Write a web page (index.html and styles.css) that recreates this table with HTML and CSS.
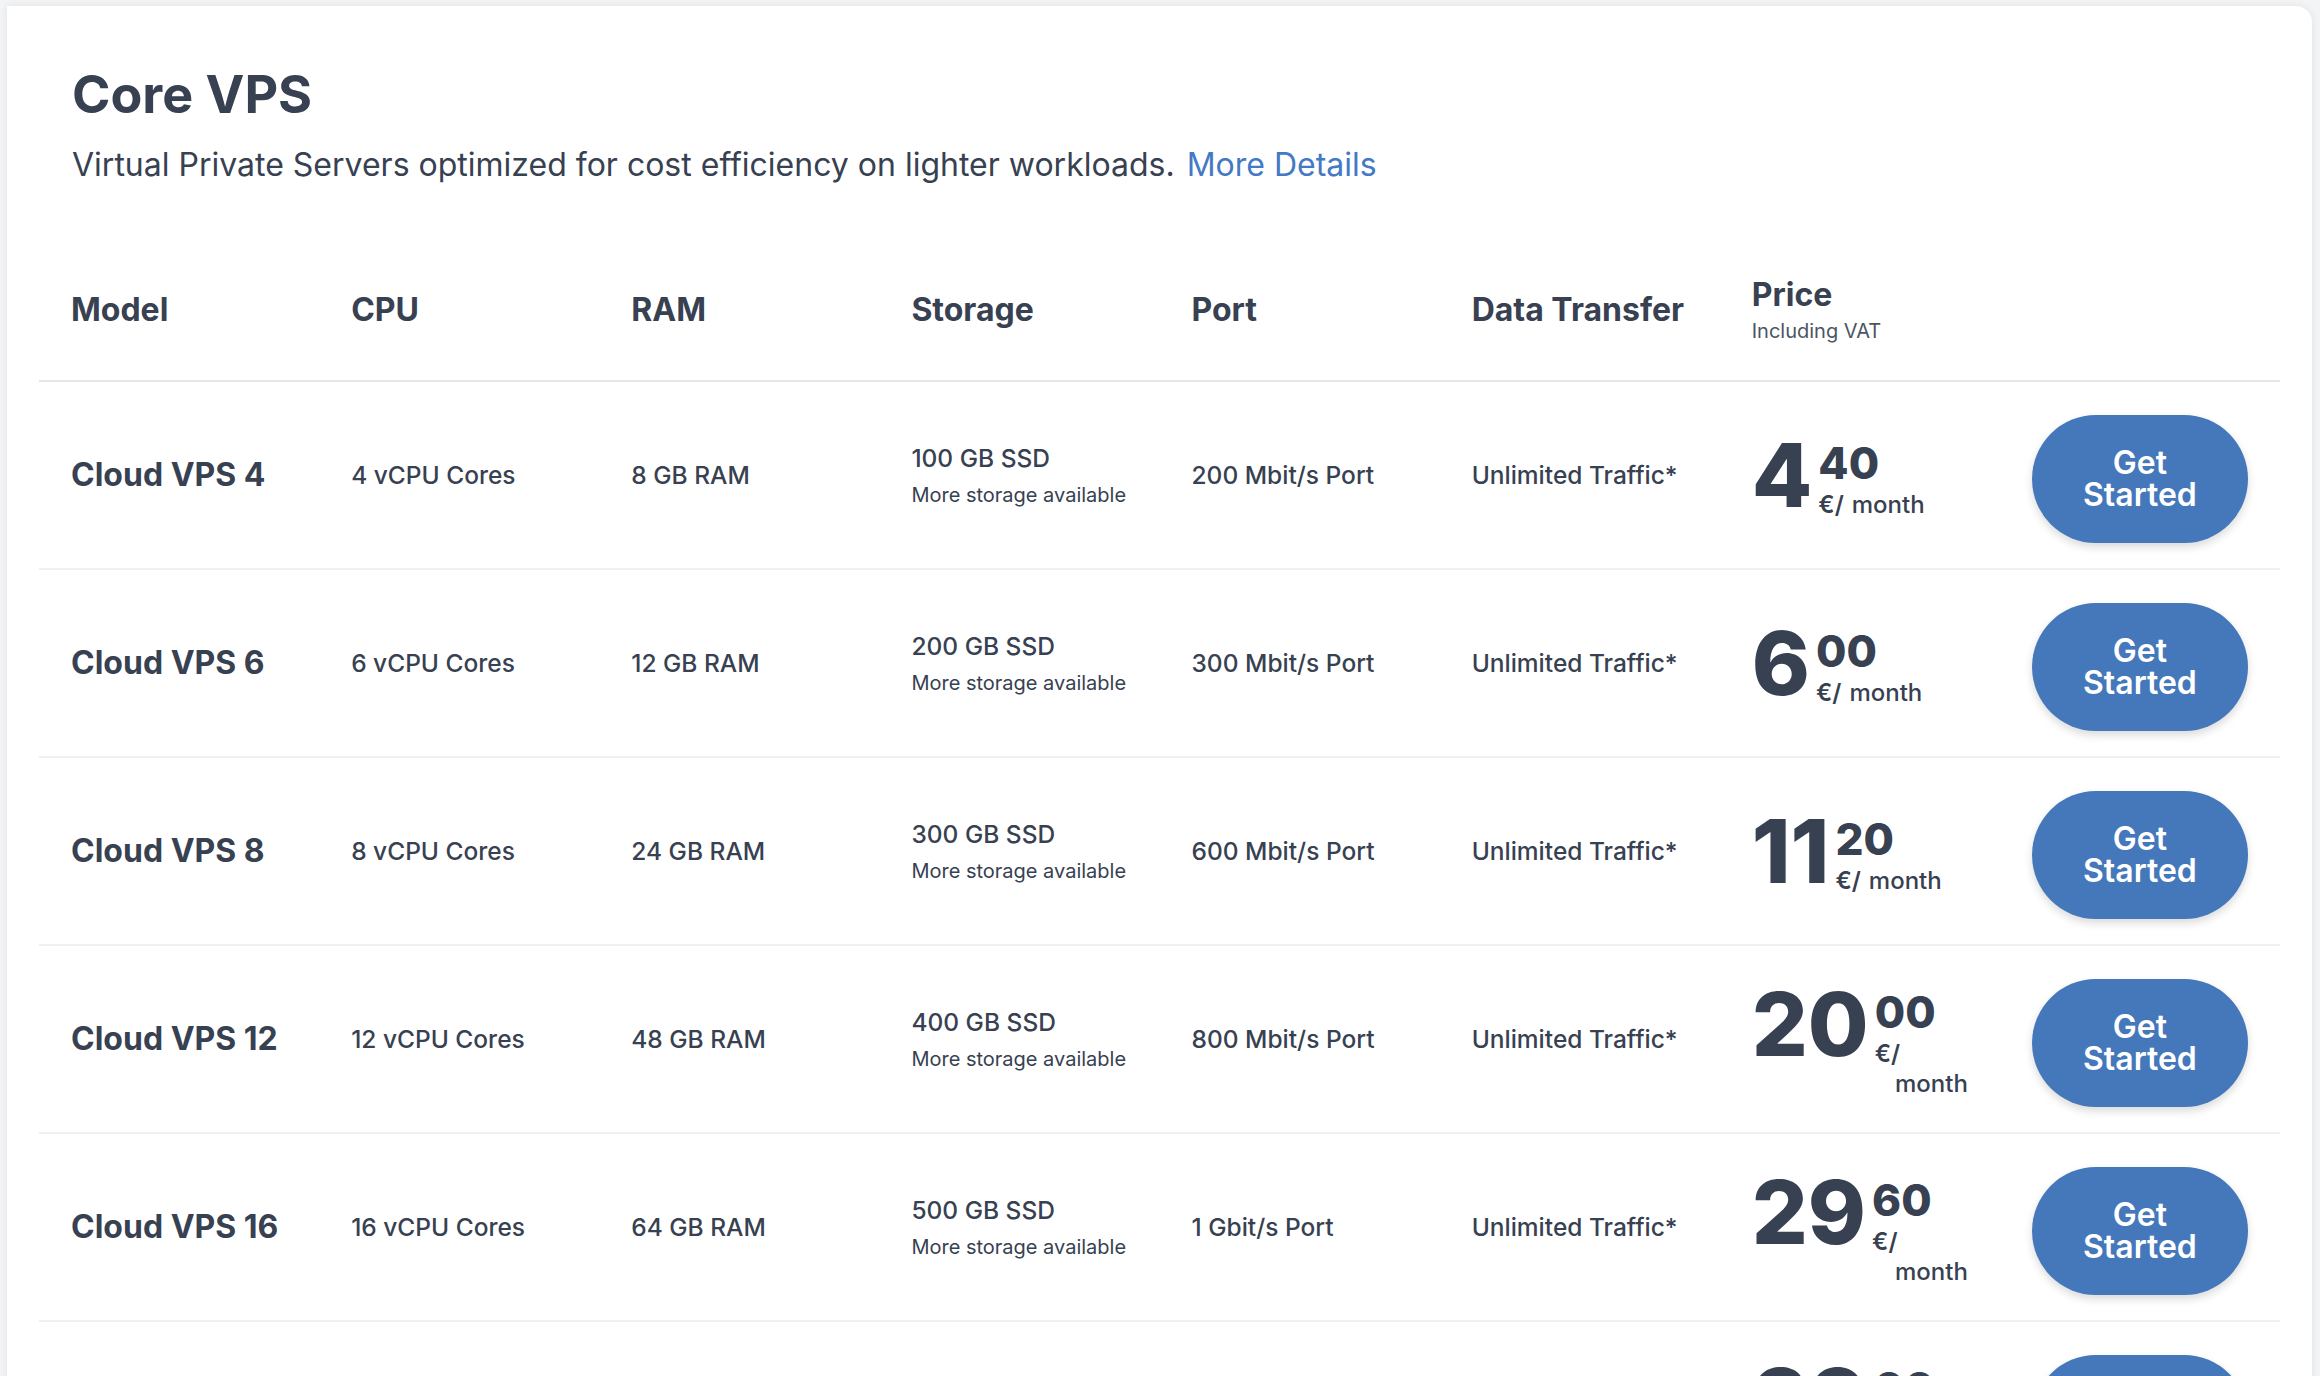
FILE: index.html
```html
<!DOCTYPE html>
<html lang="en">
<head>
<meta charset="utf-8">
<title>Core VPS</title>
<link rel="stylesheet" href="styles.css">
</head>
<body>
<main class="card">
  <header class="intro">
    <h1>Core VPS</h1>
    <p>Virtual Private Servers optimized for cost efficiency on lighter workloads.<a href="#">More Details</a></p>
  </header>
  <div class="plans">
    <div class="row head">
      <div class="cell"><span class="label">Model</span></div>
      <div class="cell"><span class="label">CPU</span></div>
      <div class="cell"><span class="label">RAM</span></div>
      <div class="cell"><span class="label">Storage</span></div>
      <div class="cell"><span class="label">Port</span></div>
      <div class="cell"><span class="label">Data Transfer</span></div>
      <div class="cell"><span class="label">Price</span><span class="sub">Including VAT</span></div>
      <div class="cell"></div>
    </div>

    <div class="row">
      <div class="cell model">Cloud VPS 4</div>
      <div class="cell">4 vCPU Cores</div>
      <div class="cell">8 GB RAM</div>
      <div class="cell"><div>100 GB SSD</div><div class="note">More storage available</div></div>
      <div class="cell">200 Mbit/s Port</div>
      <div class="cell">Unlimited Traffic*</div>
      <div class="cell"><div class="price"><span class="int">4</span><span class="frac"><span class="cents">40</span><span class="unit"><span>€/</span><span class="per">month</span></span></span></div></div>
      <div class="cell"><a class="btn" href="#">Get Started</a></div>
    </div>

    <div class="row">
      <div class="cell model">Cloud VPS 6</div>
      <div class="cell">6 vCPU Cores</div>
      <div class="cell">12 GB RAM</div>
      <div class="cell"><div>200 GB SSD</div><div class="note">More storage available</div></div>
      <div class="cell">300 Mbit/s Port</div>
      <div class="cell">Unlimited Traffic*</div>
      <div class="cell"><div class="price"><span class="int">6</span><span class="frac"><span class="cents">00</span><span class="unit"><span>€/</span><span class="per">month</span></span></span></div></div>
      <div class="cell"><a class="btn" href="#">Get Started</a></div>
    </div>

    <div class="row">
      <div class="cell model">Cloud VPS 8</div>
      <div class="cell">8 vCPU Cores</div>
      <div class="cell">24 GB RAM</div>
      <div class="cell"><div>300 GB SSD</div><div class="note">More storage available</div></div>
      <div class="cell">600 Mbit/s Port</div>
      <div class="cell">Unlimited Traffic*</div>
      <div class="cell"><div class="price"><span class="int">11</span><span class="frac"><span class="cents">20</span><span class="unit"><span>€/</span><span class="per">month</span></span></span></div></div>
      <div class="cell"><a class="btn" href="#">Get Started</a></div>
    </div>

    <div class="row">
      <div class="cell model">Cloud VPS 12</div>
      <div class="cell">12 vCPU Cores</div>
      <div class="cell">48 GB RAM</div>
      <div class="cell"><div>400 GB SSD</div><div class="note">More storage available</div></div>
      <div class="cell">800 Mbit/s Port</div>
      <div class="cell">Unlimited Traffic*</div>
      <div class="cell"><div class="price"><span class="int">20</span><span class="frac"><span class="cents">00</span><span class="unit"><span>€/</span><span class="per">month</span></span></span></div></div>
      <div class="cell"><a class="btn" href="#">Get Started</a></div>
    </div>

    <div class="row">
      <div class="cell model">Cloud VPS 16</div>
      <div class="cell">16 vCPU Cores</div>
      <div class="cell">64 GB RAM</div>
      <div class="cell"><div>500 GB SSD</div><div class="note">More storage available</div></div>
      <div class="cell">1 Gbit/s Port</div>
      <div class="cell">Unlimited Traffic*</div>
      <div class="cell"><div class="price"><span class="int">29</span><span class="frac"><span class="cents">60</span><span class="unit"><span>€/</span><span class="per">month</span></span></span></div></div>
      <div class="cell"><a class="btn" href="#">Get Started</a></div>
    </div>

    <div class="row">
      <div class="cell model">Cloud VPS 24</div>
      <div class="cell">24 vCPU Cores</div>
      <div class="cell">96 GB RAM</div>
      <div class="cell"><div>600 GB SSD</div><div class="note">More storage available</div></div>
      <div class="cell">1 Gbit/s Port</div>
      <div class="cell">Unlimited Traffic*</div>
      <div class="cell"><div class="price"><span class="int">39</span><span class="frac"><span class="cents">00</span><span class="unit"><span>€/</span><span class="per">month</span></span></span></div></div>
      <div class="cell"><a class="btn" href="#">Get Started</a></div>
    </div>
  </div>
</main>
</body>
</html>
```

FILE: styles.css
```css
html, body {
  margin: 0;
  padding: 0;
}

body {
  background: #f3f4f6;
  font-family: Inter, "Noto Sans", "Liberation Sans", sans-serif;
  color: #374151;
}

.card {
  margin: 6px 8px 0 7px;
  background: #ffffff;
  border-radius: 0 16px 0 0;
  padding: 58px 32px 40px;
  box-shadow: 0 0 8px rgba(0, 0, 0, 0.08);
}

.intro {
  padding-left: 33px;
}

.intro h1 {
  margin: 0;
  font-size: 52px;
  line-height: 62px;
  font-weight: 700;
}

.intro p {
  margin: 15px 0 50px;
  font-size: 32px;
  line-height: 48px;
  font-weight: 400;
}

.intro a {
  margin-left: 12px;
  color: #4479c4;
  text-decoration: none;
}

.row {
  display: grid;
  grid-template-columns: repeat(8, 1fr);
  align-items: center;
  min-height: 186px;
  border-bottom: 2px solid #eef0f2;
}

.row.head {
  min-height: 141px;
  border-bottom-color: #e4e7eb;
}

.cell {
  padding: 0 32px;
  font-size: 24.5px;
  line-height: 36px;
  font-weight: 500;
}

.label {
  display: block;
  font-size: 32px;
  line-height: 40px;
  font-weight: 700;
}

.sub {
  display: block;
  margin-top: 3px;
  font-size: 20px;
  line-height: 27px;
  font-weight: 400;
  color: #4b5563;
}

.model {
  font-size: 32px;
  line-height: 40px;
  font-weight: 700;
}

.note {
  margin-top: 4px;
  font-size: 20px;
  line-height: 30px;
  font-weight: 400;
}

.price {
  display: flex;
  align-items: flex-start;
}

.int {
  font-size: 88px;
  line-height: 88px;
  font-weight: 800;
}

.frac {
  display: flex;
  flex-direction: column;
  margin: 10px 0 0 6px;
  min-width: 0;
}

.cents {
  font-size: 44px;
  line-height: 44px;
  font-weight: 800;
}

.unit {
  display: flex;
  flex-wrap: wrap;
  column-gap: 8px;
  margin-top: 5px;
  font-size: 24px;
  line-height: 30px;
  font-weight: 600;
}

.unit .per {
  margin-left: auto;
  font-weight: 500;
}

.btn {
  display: flex;
  align-items: center;
  justify-content: center;
  height: 128px;
  margin-top: 8px;
  padding: 0 40px;
  border-radius: 64px;
  background: #4577bb;
  color: #ffffff;
  font-size: 32px;
  line-height: 32px;
  font-weight: 600;
  text-align: center;
  text-decoration: none;
  box-shadow: 0 4px 8px rgba(0, 0, 0, 0.15);
}
```
